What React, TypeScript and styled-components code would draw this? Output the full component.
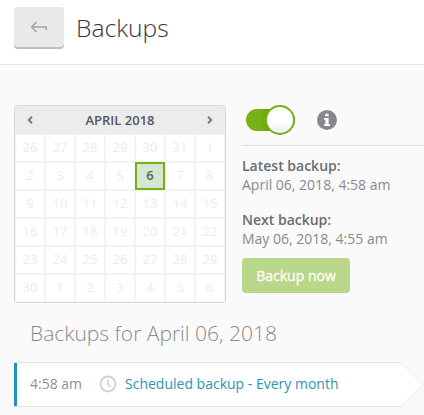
import React from "react";
import styled, { createGlobalStyle } from "styled-components";

const GlobalStyle = createGlobalStyle`
  * { box-sizing: border-box; }
  body {
    margin: 0;
    background: #fafafa;
    font-family: "Open Sans", "Noto Sans", sans-serif;
    color: #8a8a8a;
    overflow: hidden;
  }
  button { font-family: inherit; border: 0; padding: 0; }
`;

const Page = styled.div`
  width: 424px;
  height: 415px;
  overflow: hidden;
  background: #fafafa;
`;

const Header = styled.header`
  display: flex;
  align-items: flex-start;
  height: 65px;
  padding: 7px 14px 0;
  gap: 12px;
  background: #fff;
  border-bottom: 1px solid #e9e9e9;
`;

const BackButton = styled.button`
  display: flex;
  justify-content: center;
  width: 50px;
  height: 42px;
  padding-top: 14px;
  border-radius: 4px;
  background: #e9e9e9;
  box-shadow: inset 0 -2px 0 #bfbfbf;
`;

const Title = styled.h1`
  margin: 0;
  font-size: 24.6px;
  line-height: 42px;
  font-weight: 300;
  color: #33363d;
`;

const Main = styled.main`
  display: flex;
  gap: 16px;
  padding: 40px 0 0 14px;
`;

const Calendar = styled.section`
  flex: none;
  width: 212px;
  height: 198px;
  border: 1px solid #d9d9d9;
  border-radius: 3px;
  overflow: hidden;
  background: #fff;
`;

const Month = styled.div`
  display: flex;
  align-items: center;
  justify-content: space-between;
  height: 28px;
  padding: 0 12px;
  background: #ececec;
  color: #54565c;
  font-size: 13px;
  font-weight: 600;
  line-height: 28px;
`;

const Days = styled.div`
  display: grid;
  grid-template-columns: repeat(7, 30px);
  grid-auto-rows: 28px;
`;

const Day = styled.div<{ $selected?: boolean }>`
  display: flex;
  align-items: center;
  justify-content: center;
  padding-bottom: 2px;
  border: ${(p) => (p.$selected ? "2px solid #76b216" : "1px solid #f3f3f3")};
  background: ${(p) => (p.$selected ? "#d6e7cf" : "#fff")};
  color: ${(p) => (p.$selected ? "#5d6066" : "#ececec")};
  font-size: 13px;
  line-height: 18px;
  font-weight: ${(p) => (p.$selected ? 600 : 400)};
`;

const Side = styled.section`
  flex: 1;
`;

const Controls = styled.div`
  display: flex;
  align-items: center;
  gap: 22px;
  height: 41px;
  padding: 0 0 11px 4px;
  border-bottom: 1px solid #dedede;
`;

const Switch = styled.div`
  display: flex;
  align-items: center;
  justify-content: flex-end;
  width: 49px;
  height: 22px;
  border-radius: 11px;
  background: linear-gradient(90deg, #76b216 14px, #66a10f 24px);
`;

const Knob = styled.div`
  flex: none;
  width: 30px;
  height: 30px;
  border: 2px solid #76b216;
  border-radius: 50%;
  background: linear-gradient(#fff 60%, #eeeeee);
`;

const Info = styled.dl`
  margin: 0 0 16px;
  font-size: 14px;
  line-height: 19px;
`;

const Label = styled.dt`
  color: #6a6c72;
  font-weight: 600;
`;

const Value = styled.dd`
  margin: 0;
  color: #88898d;
`;

const Details = styled.div`
  padding-top: 10px;
`;

const BackupButton = styled.button`
  display: block;
  width: 108px;
  height: 35px;
  margin-top: -6px;
  border-radius: 4px;
  background: #b9d788;
  color: #fafcf5;
  font-size: 14px;
  font-weight: 400;
  -webkit-text-stroke: 0.4px #fafcf5;
  line-height: 35px;
`;

const ListTitle = styled.h2`
  margin: 0;
  padding: 16px 0 0 30px;
  height: 59px;
  font-size: 21px;
  line-height: 28px;
  font-weight: 300;
  color: #8b8b8b;
`;

const Entry = styled.div`
  display: flex;
  height: 45px;
  margin-left: 14px;
`;

const EntryBody = styled.div`
  display: flex;
  align-items: center;
  width: 387px;
  padding: 0 0 2px 13px;
  background: #fff;
  border: solid #e2e2e2;
  border-width: 1px 0;
  box-shadow: inset 3px 0 0 #1b96b4;
  font-size: 14px;
  line-height: 19px;
`;

const Time = styled.span`
  width: 72px;
  padding-left: 3px;
  color: #8f8f8f;
`;

const EntryName = styled.a`
  margin-left: 8px;
  color: #2b94b3;
`;

const grid = [
  [26, 27, 28, 29, 30, 31, 1],
  [2, 3, 4, 5, 6, 7, 8],
  [9, 10, 11, 12, 13, 14, 15],
  [16, 17, 18, 19, 20, 21, 22],
  [23, 24, 25, 26, 27, 28, 29],
  [30, 1, 2, 3, 4, 5, 6],
];

const Chevron = ({ left = false }: { left?: boolean }) => (
  <svg width="6" height="8" viewBox="0 0 6 8" fill="none" stroke="#77797e" strokeWidth="2">
    <path d={left ? "M5 .8 1.8 4 5 7.2" : "M1 .8 4.2 4 1 7.2"} />
  </svg>
);

export default function App() {
  return (
    <>
      <GlobalStyle />
      <Page>
        <Header>
          <BackButton aria-label="Back">
            <svg width="18" height="12" viewBox="0 0 18 12" fill="none" stroke="#a3a4a8" strokeWidth="1.5">
              <path d="M6.5 1 1.8 6 6.5 11M2 6H16.3V9.3" />
            </svg>
          </BackButton>
          <Title>Backups</Title>
        </Header>
        <Main>
          <Calendar>
            <Month>
              <Chevron left />
              <span>APRIL 2018</span>
              <Chevron />
            </Month>
            <Days>
              {grid.map((week, w) =>
                week.map((d, i) => (
                  <Day key={`${w}-${i}`} $selected={w === 1 && d === 6}>
                    {d}
                  </Day>
                ))
              )}
            </Days>
          </Calendar>
          <Side>
            <Controls>
              <Switch role="switch" aria-checked="true">
                <Knob />
              </Switch>
              <svg width="20" height="20" viewBox="0 0 20 20">
                <circle cx="10" cy="10" r="10" fill="#87888c" />
                <path d="M8.3 3.7h3.3v2.5H8.3zM7 8h4.6v6.2H13v1.9H7v-1.9h1.4V9.8H7z" fill="#fff" />
              </svg>
            </Controls>
            <Details>
              <Info>
                <Label>Latest backup:</Label>
                <Value>April 06, 2018, 4:58 am</Value>
              </Info>
              <Info>
                <Label>Next backup:</Label>
                <Value>May 06, 2018, 4:55 am</Value>
              </Info>
              <BackupButton>Backup now</BackupButton>
            </Details>
          </Side>
        </Main>
        <ListTitle>Backups for April 06, 2018</ListTitle>
        <Entry>
          <EntryBody>
            <Time>4:58 am</Time>
            <svg width="18" height="18" viewBox="0 0 18 18" fill="none" stroke="#d2d2d2" strokeWidth="2">
              <circle cx="9" cy="9" r="7.5" />
              <path d="M9 4.5V9.3L11.3 11.8" strokeWidth="1.7" />
            </svg>
            <EntryName>Scheduled backup - Every month</EntryName>
          </EntryBody>
          <svg width="23" height="45" viewBox="0 0 23 45">
            <path d="M0 .5 22 22.5 0 44.5" fill="#fff" stroke="#ebebeb" />
          </svg>
        </Entry>
      </Page>
    </>
  );
}
